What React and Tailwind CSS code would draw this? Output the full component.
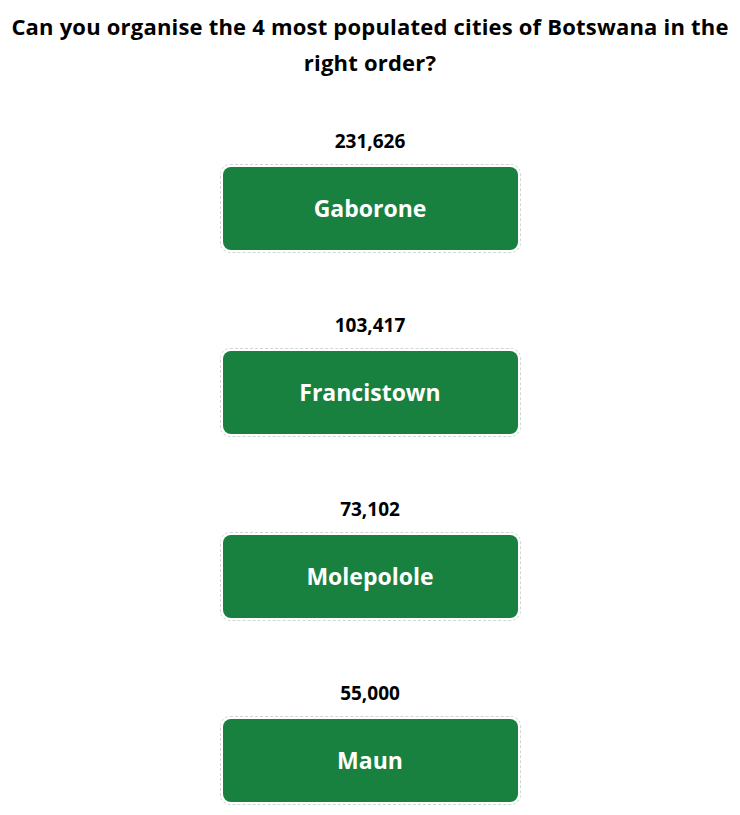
const items = [
  { pop: "231,626", city: "Gaborone" },
  { pop: "103,417", city: "Francistown" },
  { pop: "73,102", city: "Molepolole" },
  { pop: "55,000", city: "Maun" },
];

export default function App() {
  return (
    <div className="min-h-[815px] bg-white text-black" style={{ fontFamily: '"Open Sans", "Noto Sans", sans-serif' }}>
      <h1 className="px-[6px] pt-[8px] text-center text-[22px] font-bold leading-[36px] tracking-[0.2px]">
        Can you organise the 4 most populated cities of Botswana in the right order?
      </h1>

      <div className="mt-[49px] flex flex-col items-center gap-[60px]">
        {items.map((it) => (
          <div key={it.city} className="flex flex-col items-center">
            <div className="h-[24px] text-[19px] font-bold leading-[24px]">{it.pop}</div>
            <div className="mt-[11px] rounded-[10px] border border-dashed border-[#cdd9d2] p-[2px]">
              <div className="flex h-[83px] w-[295px] items-center justify-center rounded-[8px] bg-[#188140] text-[23px] font-bold text-white">
                {it.city}
              </div>
            </div>
          </div>
        ))}
      </div>
    </div>
  );
}
